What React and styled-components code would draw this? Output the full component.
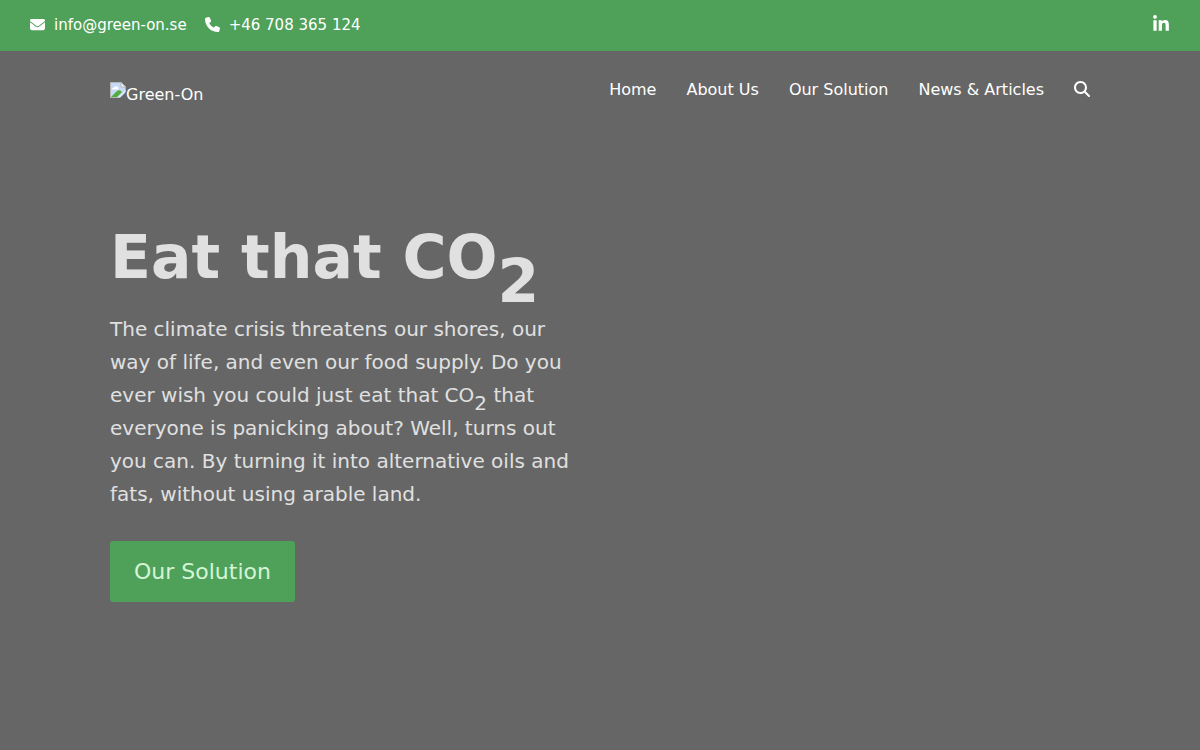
import React from 'react';
import styled, { createGlobalStyle } from 'styled-components'
import { FaEnvelope, FaPhone, FaLinkedinIn, FaMagnifyingGlass } from 'react-icons/fa6'

const GlobalStyle = createGlobalStyle`
    * {
        box-sizing: border-box;
    }

    body {
        margin: 0;
        background-color: #666666;
        font-family: "DejaVu Sans", sans-serif;
        font-size: 16px;
        color: #ffffff;
    }

    a {
        color: inherit;
        text-decoration: none;
    }
`

const TopBar = styled.div`
    display: flex;
    align-items: center;
    justify-content: space-between;
    height: 51px;
    padding: 0 30px 2px;
    background-color: #4fa15a;
`

const ContactList = styled.div`
    display: flex;
    gap: 18px;
`

const ContactLink = styled.a`
    display: flex;
    align-items: center;
    gap: 9px;
    font-size: 15px;
    line-height: 24px;
`

const SocialLink = styled.a`
    display: flex;
    font-size: 18px;
    padding-bottom: 2px;
`

const Container = styled.div`
    max-width: 1040px;
    margin: 0 auto;
    padding: 0 30px;
`

const Header = styled(Container)`
    display: flex;
    align-items: flex-start;
    justify-content: space-between;
    padding-top: 26px;
`

const Logo = styled.a`
    display: flex;
    align-items: flex-start;
    padding-top: 5px;
    line-height: 26px;
`

const Nav = styled.nav`
    display: flex;
    align-items: flex-start;
    gap: 30px;
    line-height: 26px;
`

const SearchButton = styled.button`
    display: flex;
    align-items: center;
    height: 24px;
    padding: 0;
    border: 0;
    background: none;
    color: inherit;
    font-size: 16px;
    cursor: pointer;
`

const Hero = styled(Container)`
    padding-top: 113px;
    padding-bottom: 60px;
    color: #e0e0e0;
`

const Title = styled.h1`
    margin: 0 0 20px;
    font-size: 60px;
    line-height: 72px;
`

const Sub = styled.sub`
    font-size: inherit;
    line-height: 0;
    vertical-align: -0.4em;
`

const Lead = styled.p`
    max-width: 470px;
    margin: 0 0 30px;
    font-size: 20px;
    line-height: 33px;
`

const HeroButton = styled.a`
    display: inline-block;
    padding: 14px 24px;
    border-radius: 3px;
    background-color: #4fa15a;
    font-size: 22px;
    line-height: 33px;

    && {
        color: #d3f5d6;
    }
`

const LogoImage = () => (
    <svg width="16" height="16" viewBox="0 0 16 16" aria-hidden="true">
        <path d="M0.5 0.5H11L15.5 5V15.5H0.5Z" fill="#c6d9f5" stroke="#b5b5b5" />
        <path d="M2 7.5Q2 5.5 4 5.5Q5 3.5 7 4.5Q9 5 8.5 7.5Z" fill="#ffffff" />
        <path d="M1 15L7 9Q9 7.5 11 9L12 10L7 15Z" fill="#4caf3f" />
        <path d="M11 0.5V5H15.5Z" fill="#ffffff" stroke="#b5b5b5" />
        <path d="M16 10L10 16H16Z" fill="#666666" />
        <path d="M15.5 9L8.5 15.5" stroke="#f3f3f3" strokeWidth="1" />
    </svg>
)

const links = ['Home', 'About Us', 'Our Solution', 'News & Articles']

const App = () => {
    return (
        <>
            <GlobalStyle/>
            <TopBar>
                <ContactList>
                    <ContactLink href="mailto:info@green-on.se">
                        <FaEnvelope/>
                        info@green-on.se
                    </ContactLink>
                    <ContactLink href="tel:+46708365124">
                        <FaPhone/>
                        +46 708 365 124
                    </ContactLink>
                </ContactList>
                <SocialLink href="#linkedin" aria-label="LinkedIn">
                    <FaLinkedinIn/>
                </SocialLink>
            </TopBar>
            <Header as="header">
                <Logo href="#home">
                    <LogoImage/>
                    Green-On
                </Logo>
                <Nav>
                    {links.map(link => (
                        <a key={link} href="#menu">{link}</a>
                    ))}
                    <SearchButton type="button" aria-label="Search">
                        <FaMagnifyingGlass/>
                    </SearchButton>
                </Nav>
            </Header>
            <Hero as="main">
                <Title>Eat that CO<Sub>2</Sub></Title>
                <Lead>
                    The climate crisis threatens our shores, our way of life, and even our
                    food supply. Do you ever wish you could just eat that CO<Sub>2</Sub> that
                    everyone is panicking about? Well, turns out you can. By turning it into
                    alternative oils and fats, without using arable land.
                </Lead>
                <HeroButton href="#solution">Our Solution</HeroButton>
            </Hero>
        </>
    );
}

export default App;
